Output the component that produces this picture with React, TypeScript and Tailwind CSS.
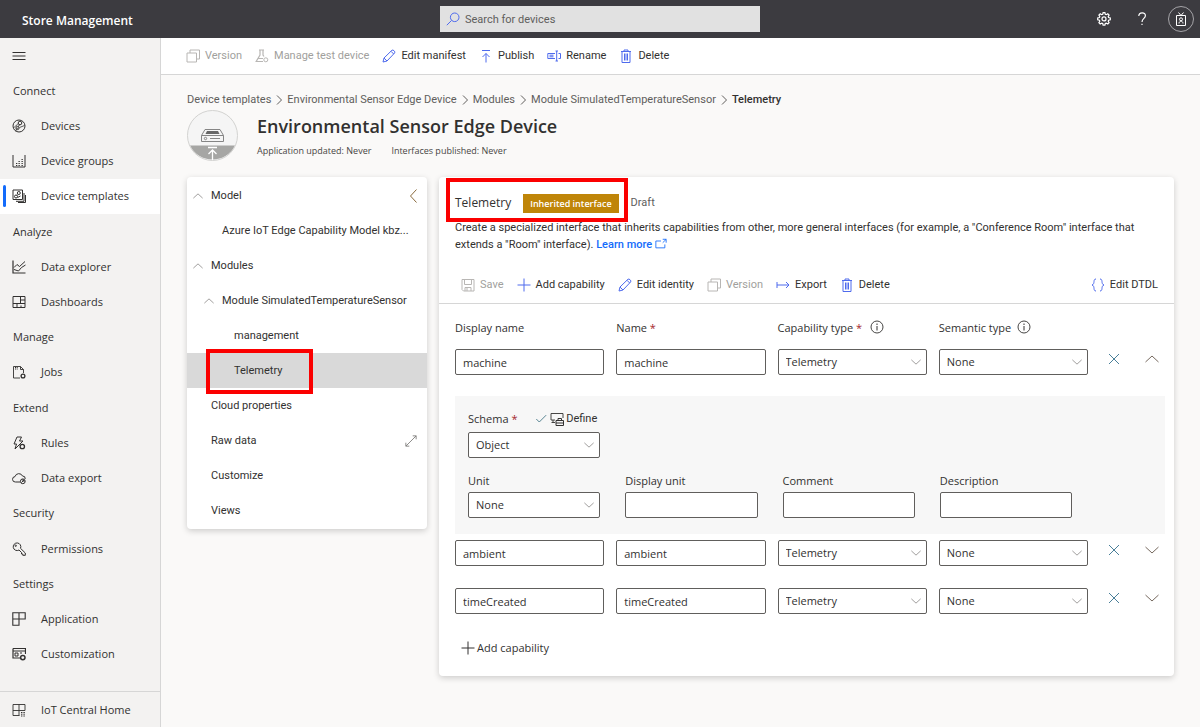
import React from "react";

type IconProps = { children: React.ReactNode; className?: string };

function Icon({ children, className = "size-3.5" }: IconProps) {
  return (
    <svg
      viewBox="0 0 14 14"
      aria-hidden="true"
      className={`shrink-0 fill-none stroke-current ${className}`}
      strokeWidth="1"
    >
      {children}
    </svg>
  );
}

const icons = {
  menu: <path d="M.5 3.5h13M.5 7h13M.5 10.5h13" />,
  devices: (
    <>
      <circle cx="7" cy="7" r="6" />
      <path d="M1.500 8.500c1.500-.5 3-2 4.500-4M4 12.500c0-2 .5-3 2-3.500M7.500 8.500l5-2" strokeWidth=".8" />
      <circle cx="8" cy="4" r="1.800" />
      <circle cx="5.500" cy="9" r="1.600" />
      <path d="m6.500 7.500 1-2" />
    </>
  ),
  groups: (
    <>
      <path d="M1 1v12h12V1" />
      <path d="M4 9.500h1.300M4 11.500h1.300M6.500 7.500h1.300M6.500 9.500h1.300M6.500 11.500h1.300M9.500 5.500h1.300M9.500 7.500h1.300M9.500 9.500h1.300M9.500 11.500h1.300" strokeWidth="1.200" />
    </>
  ),
  templates: (
    <>
      <path d="M1 1h9.500v9.500H1z" />
      <path d="M12 4v8.300H4M13.500 6v7.500H6" />
      <circle cx="6.800" cy="4" r="1.500" />
      <circle cx="4" cy="7.500" r="1.500" />
      <path d="m5 6.500 1-1M5.500 8.500l3-1.500" />
    </>
  ),
  explorer: (
    <>
      <path d="M1 .5V13h12.500" strokeWidth="1.200" />
      <path d="m2 7.500 3-3 2.500 2 5.500-5M2 9.500l4.500 1.500 3-3.500 4-2.500" />
    </>
  ),
  dashboards: <path d="M1 1.500h12v11H1zM8.500 1.500v7M1 8.500h12M8.500 5H13M5 8.500v4M9 10.500v2" />,
  jobs: (
    <>
      <path d="M8 13H1.500V1.500h7l3 3V8M8.500 1.500v3h3" strokeWidth=".9" />
      <path d="M3 4h3M3 2.500h3" strokeDasharray="1 .7" />
      <circle cx="11" cy="11" r="1.900" strokeWidth="1.300" />
    </>
  ),
  rules: (
    <>
      <path d="M5 1h4.500L7.500 5h3.500L3 13l1.500-5H2z" />
      <circle cx="10.300" cy="10.500" r="2.200" className="fill-[#f3f2f1]" strokeWidth="1.300" />
    </>
  ),
  exportCloud: (
    <>
      <path d="M8 11H3.500A2.700 2.700 0 0 1 3 5.600 4 4 0 0 1 10.500 5a2.700 2.700 0 0 1 2.700 3" />
      <circle cx="10.800" cy="10.300" r="2.400" />
      <path d="m9.500 11.500 2.400-2.400M12 11V9h-2" />
    </>
  ),
  key: (
    <>
      <path d="M8.500 6.300 13.300 11v2.300h-2.500V12H9.500v-1.500L7 8A3.800 3.800 0 1 1 8.500 6.300z" />
      <circle cx="3.700" cy="3.700" r=".7" />
    </>
  ),
  application: <path d="M.8.800h12.400v6.200H7v6.200H.8zM7 .8V7M.8 7H7" strokeWidth="1.100" />,
  customization: (
    <>
      <path d="M1 1.500h12.500V7M1 1.500V11h7M1 4h12.500" strokeWidth="1.200" />
      <path d="M3 6h3v3H3zM8 6h2" />
      <circle cx="10.800" cy="10.600" r="2.200" strokeWidth="1.500" />
    </>
  ),
  home: (
    <>
      <path d="M7.500 12.500H1v-11h12v6H1M7 1.500v11" strokeWidth=".9" />
      <path d="M9 9.500h4M9 11.200h4M9 13h4" strokeDasharray="1 .6" />
    </>
  ),
  version: <path d="M1 4h9.500v9H1zM4 4V1h9.500v9h-3" />,
  flask: (
    <>
      <path d="M4 1h5M5 1v5l-3.800 6.500H8M8 1v5l1 1.500M3 9.500h5" strokeWidth="1.200" />
      <circle cx="10.800" cy="10.800" r="2" />
    </>
  ),
  pencil: <path d="m1 13 1-4L10 1.200c1-.9 3.600 1.500 2.700 2.700L5 12zM2 9l3 3M9 2.300 11.700 5" />,
  publish: <path d="M3 1.500h8M7 13.500v-9M3.500 8 7 4.500 10.500 8" />,
  rename: <path d="M8 9.500H.8v-5H8M2.500 6.200h4M2.500 7.800h4M8.500 2h2.500M8.500 12h2.500M9.700 2v10M11.500 4.500h2v5h-2" />,
  trash: <path d="M2 2.500h10M5 2.500V1h4v1.500M3 2.500v11h8v-11M5.500 4.500v7M7 4.500v7M8.500 4.500v7" />,
  save: <path d="M1 1.500h12v11.500H2.500L1 11.500zM3.500 1.500v5h7v-5M4 13V9.500h6V13M6 10v3" />,
  plus: <path d="M7 .5v13M.5 7h13" />,
  exportRight: <path d="M1 4v6M1 7h12M10 4l3 3-3 3" />,
  braces: <path d="M5 1C1.500 1 4.500 6 1 7c3.500 1 .5 6 4 6M9 1c3.500 0 .5 5 4 6-3.500 1-.5 6-4 6" />,
  chevronUp: <path d="m.5 10 6.500-6 6.500 6" />,
  chevronDown: <path d="m.5 4 6.500 6 6.500-6" />,
  chevronLeft: <path d="M10.500.5 4.500 7l6 6.500" />,
  chevronRight: <path d="m5 2.500 4.500 4.500L5 11.500" />,
  expand: <path d="M1 13 13 1M9 1h4v4M1 9v4h4" />,
  close: <path d="m2 2 10 10M12 2 2 12" />,
  check: <path d="m1.500 7 3.500 3.500 8-8" />,
  info: (
    <>
      <circle cx="7" cy="7" r="6" strokeWidth=".9" />
      <path d="M7 6v4.500M7 3.500V5" />
    </>
  ),
  external: <path d="M7 3.500H1v8h10.500V7.500M9 1.500h4v4M13 1.500 9 5.500" />,
  define: (
    <>
      <path d="M5 8H1V1.500h12V6M1.500 10.500H5M3 8v2.500" strokeWidth=".9" />
      <path d="M6 8.500h7.500v5H6zM8 8.500v-2h3.500v2M6 11h7.500" />
    </>
  ),
  search: (
    <>
      <circle cx="8.700" cy="5.300" r="4.300" />
      <path d="M5.600 8.400.8 13.200" />
    </>
  ),
};

type IconName = keyof typeof icons;
type NavEntry = { label: string; icon?: IconName; active?: boolean };

const nav: NavEntry[] = [
  { label: "Connect" },
  { label: "Devices", icon: "devices" },
  { label: "Device groups", icon: "groups" },
  { label: "Device templates", icon: "templates", active: true },
  { label: "Analyze" },
  { label: "Data explorer", icon: "explorer" },
  { label: "Dashboards", icon: "dashboards" },
  { label: "Manage" },
  { label: "Jobs", icon: "jobs" },
  { label: "Extend" },
  { label: "Rules", icon: "rules" },
  { label: "Data export", icon: "exportCloud" },
  { label: "Security" },
  { label: "Permissions", icon: "key" },
  { label: "Settings" },
  { label: "Application", icon: "application" },
  { label: "Customization", icon: "customization" },
];

const compact = "font-[Roboto,'Noto_Sans',sans-serif]";

function Sidebar() {
  return (
    <aside className="flex w-[161px] shrink-0 flex-col border-r border-[#d6d6d6] bg-[#f3f2f1]">
      <button type="button" aria-label="Toggle navigation" className="flex h-[35px] shrink-0 items-center pl-3">
        <Icon>{icons.menu}</Icon>
      </button>
      <nav className="flex flex-1 flex-col pb-[19px]">
        {nav.map((n) =>
          n.icon ? (
            <a
              key={n.label}
              href="#"
              className={`flex min-h-7 flex-1 items-center ${n.active ? "bg-white" : ""}`}
            >
              <span className={`ml-[3px] h-[22px] w-[3px] rounded-sm ${n.active ? "bg-[#136bfb]" : ""}`} />
              <Icon className="mr-[15px] ml-1.5 size-3.5">{icons[n.icon]}</Icon>
              {n.label}
            </a>
          ) : (
            <h2 key={n.label} className="flex min-h-7 flex-1 items-center pl-[13px] font-medium">
              {n.label}
            </h2>
          ),
        )}
      </nav>
      <a href="#" className="flex h-9 shrink-0 items-center gap-[15px] border-t border-[#d6d6d6] pl-3">
        <Icon>{icons.home}</Icon>
        IoT Central Home
      </a>
    </aside>
  );
}

function Header() {
  return (
    <header className="grid h-[38px] shrink-0 grid-cols-[1fr_320px_1fr] items-center bg-[#3c3b40] text-white">
      <div className="pt-1 pl-[22px] text-[12px] font-semibold">Store Management</div>
      <label className="flex h-[26px] items-center gap-[5px] bg-[#e1e1e1] pl-1.5 text-[#4f6bed]">
        <Icon>{icons.search}</Icon>
        <input
          type="search"
          aria-label="Search for devices"
          placeholder="Search for devices"
          className={`${compact} min-w-0 flex-1 bg-transparent pt-0.5 text-[#323130] outline-none placeholder:text-[#605e5c]`}
        />
      </label>
      <div className="flex items-center justify-end gap-[22px] pr-1.5">
        <button type="button" aria-label="Settings" className="flex size-4 items-center justify-center">
          <Icon>
            <path d="m5.700 2.300.4-1.700h1.800l.4 1.700 1 .4 1.500-.9 1.300 1.300-.9 1.500.4 1 1.700.4v1.800l-1.700.4-.4 1 .9 1.500-1.300 1.300-1.500-.9-1 .4-.4 1.700H6.100l-.4-1.700-1-.4-1.500.9-1.300-1.300.9-1.500-.4-1L.7 7.800V6l1.700-.4.4-1-.9-1.500 1.300-1.300 1.500.9z" strokeWidth="1.200" />
            <circle cx="7" cy="6.900" r="2" strokeWidth="1.200" />
          </Icon>
        </button>
        <div className="flex items-center gap-[18px]">
          <button type="button" aria-label="Help" className="flex size-4 items-center justify-center">
            <Icon>
              <path d="M3.800 4C3.800 1.800 5.200.8 7.200.8s3.200 1.100 3.200 2.900C10.400 6.300 7 6.500 7 10M7 11.700V13" strokeWidth="1.200" />
            </Icon>
          </button>
          <button
            type="button"
            aria-label="Account"
            className="flex size-[26px] items-center justify-center rounded-full border border-[#a5a4a8]"
          >
            <Icon>
              <path d="M2.500 3.500h9v10h-9zM4.500.5 7 3.500l2.500-3M5 11.500c0-3 4-3 4 0" />
              <circle cx="7" cy="7.300" r="1.500" />
            </Icon>
          </button>
        </div>
      </div>
    </header>
  );
}

function Command({ icon, label, disabled, quiet }: { icon: IconName; label: string; disabled?: boolean; quiet?: boolean }) {
  return (
    <button
      type="button"
      disabled={disabled}
      className={`flex items-center whitespace-nowrap ${quiet ? "gap-0.5" : "gap-[5px]"} ${disabled ? "text-[#a19f9d]" : "text-[#323130]"}`}
    >
      <Icon
        className={disabled ? "size-3.5 text-[#b8b6b4]" : quiet ? "size-3.5" : "size-3.5 text-[#4f6bed]"}
      >
        {icons[icon]}
      </Icon>
      {label}
    </button>
  );
}

const box = "h-[26px] w-full min-w-0 rounded-xs border border-[#605e5c] bg-white px-[7px] text-[#323130] outline-none";

function TextBox({ label, id, value = "" }: { label?: string; id?: string; value?: string }) {
  return <input type="text" id={id} aria-label={label} defaultValue={value} className={box} />;
}

function Select({ label, id, value }: { label?: string; id?: string; value: string }) {
  return (
    <div className="relative">
      <select id={id} aria-label={label} defaultValue={value} className={`${box} block appearance-none`}>
        <option>{value}</option>
      </select>
      <span className="pointer-events-none absolute inset-y-0 right-1.5 flex items-center text-[#7a7876]">
        <Icon className="size-2.5">{icons.chevronDown}</Icon>
      </span>
    </div>
  );
}

const rowGrid = "grid grid-cols-[repeat(4,minmax(0,1fr))_65px] gap-x-3";

function CapabilityRow({ name, open }: { name: string; open?: boolean }) {
  return (
    <div className={rowGrid}>
      <TextBox label="Display name" value={name} />
      <TextBox label="Name" value={name} />
      <Select label="Capability type" value="Telemetry" />
      <Select label="Semantic type" value="None" />
      <div className="flex h-5 items-center justify-between pr-1.5 pl-[7px]">
        <button type="button" aria-label={`Remove ${name}`} className="text-[#4a7f99]">
          <Icon>{icons.close}</Icon>
        </button>
        <button type="button" aria-label={open ? "Collapse" : "Expand"} className="text-[#76695f]">
          <Icon>{open ? icons.chevronUp : icons.chevronDown}</Icon>
        </button>
      </div>
    </div>
  );
}

const Star = () => <span className="text-[#a4262c]"> *</span>;

function Details() {
  return (
    <div className="mt-[21px] mb-1.5 bg-[#f7f7f7] pt-3.5 pr-[93px] pb-4 pl-[13px]">
      <div className="grid grid-cols-4 gap-x-[25px]">
        <div>
          <div className="flex h-[22px] items-start justify-between pt-px pr-[3px] leading-4">
            <label htmlFor="schema" className="font-medium">
              Schema
              <Star />
            </label>
            <span className={`${compact} flex items-center gap-[3px]`}>
              <Icon className="size-3 text-[#3d7182]">{icons.check}</Icon>
              <Command icon="define" label="Define" quiet />
            </span>
          </div>
          <Select id="schema" value="Object" />
        </div>
      </div>
      <div className="mt-3.5 grid grid-cols-4 gap-x-[25px]">
        <div>
          <label htmlFor="unit" className="block h-5 pt-px leading-4 font-medium">Unit</label>
          <Select id="unit" value="None" />
        </div>
        <div>
          <label htmlFor="display-unit" className="block h-5 pt-px leading-4 font-medium">Display unit</label>
          <TextBox id="display-unit" />
        </div>
        <div>
          <label htmlFor="comment" className="block h-5 pt-px leading-4 font-medium">Comment</label>
          <TextBox id="comment" />
        </div>
        <div>
          <label htmlFor="description" className="block h-5 pt-px leading-4 font-medium">Description</label>
          <TextBox id="description" />
        </div>
      </div>
    </div>
  );
}

type TreeEntry = { label: string; pad: string; open?: boolean; selected?: boolean; end?: IconName };

const tree: TreeEntry[] = [
  { label: "Model", pad: "pl-1.5", open: true, end: "chevronLeft" },
  { label: "Azure IoT Edge Capability Model kbz...", pad: "pl-[35px]" },
  { label: "Modules", pad: "pl-1.5", open: true },
  { label: "Module SimulatedTemperatureSensor", pad: "pl-[17px]", open: true },
  { label: "management", pad: "pl-[47px]" },
  { label: "Telemetry", pad: "pl-[47px]", selected: true },
  { label: "Cloud properties", pad: "pl-6" },
  { label: "Raw data", pad: "pl-6", end: "expand" },
  { label: "Customize", pad: "pl-6" },
  { label: "Views", pad: "pl-6" },
];

function ModelTree() {
  return (
    <section className={`${compact} w-60 shrink-0 rounded bg-white py-px shadow-[0_2px_6px_rgba(0,0,0,0.18)]`}>
      <ul>
        {tree.map((t) => (
          <li
            key={t.label}
            className={`relative flex h-[35px] items-center justify-between pt-px ${t.pad} ${t.selected ? "bg-[#d9d9d9]" : ""}`}
          >
            <button type="button" className="flex items-center gap-2 whitespace-nowrap">
              {t.open && <Icon className="size-2.5 text-[#7a7876]">{icons.chevronUp}</Icon>}
              {t.label}
            </button>
            {t.end === "chevronLeft" && <Icon className="mr-[7px] size-3.5 text-[#8a6a3c]">{icons.chevronLeft}</Icon>}
            {t.end === "expand" && <Icon className="mr-2.5 size-3 text-[#7a7876]">{icons.expand}</Icon>}
            {t.selected && (
              <span className="pointer-events-none absolute -top-1 left-[19px] h-[45px] w-[107px] border-4 border-[#fb0000]" />
            )}
          </li>
        ))}
      </ul>
    </section>
  );
}

function Editor() {
  return (
    <section className="min-w-0 flex-1 rounded bg-white pb-[18px] shadow-[0_2px_6px_rgba(0,0,0,0.18)]">
      <div className={`${compact} border-b border-[#d6d6d6] px-4 pb-2`}>
        <div className="flex h-[42px] items-center gap-3 pt-2.5">
          <div className="relative flex items-center gap-3">
            <h2 className="font-['Open_Sans','Noto_Sans',sans-serif] text-[12px] leading-5 font-medium">Telemetry</h2>
            <span className="bg-[#bf8508] px-[7px] font-['Open_Sans','Noto_Sans',sans-serif] text-[9px] leading-[19px] font-semibold text-white">
              Inherited interface
            </span>
            <span className="pointer-events-none absolute -inset-x-[9px] -top-[15px] h-11 border-4 border-[#fb0000]" />
          </div>
          <span className="text-[#605e5c]">Draft</span>
        </div>
        <p className="leading-[17px]">
          Create a specialized interface that inherits capabilities from other, more general interfaces (for example, a
          "Conference Room" interface that extends a "Room" interface).{" "}
          <a href="#" className="font-medium text-[#136bfb]">
            Learn more<Icon className="ml-[3px] inline size-3 align-[-2px]">{icons.external}</Icon>
          </a>
        </p>
        <div className="mt-[22px] flex h-5 items-center gap-[13px] pl-1.5">
          <Command icon="save" label="Save" disabled />
          <Command icon="plus" label="Add capability" />
          <Command icon="pencil" label="Edit identity" />
          <Command icon="version" label="Version" disabled />
          <Command icon="exportRight" label="Export" />
          <Command icon="trash" label="Delete" />
          <div className="ml-auto">
            <Command icon="braces" label="Edit DTDL" />
          </div>
        </div>
      </div>
      <div className="pr-[9px] pl-4">
        <div className={`${rowGrid} h-[45px] items-center pt-0.5 font-medium`}>
          <span>Display name</span>
          <span>
            Name
            <Star />
          </span>
          <span className="flex items-center gap-2">
            <span>
              Capability type
              <Star />
            </span>
            <Icon className="mb-0.5 size-3.5">{icons.info}</Icon>
          </span>
          <span className="flex items-center gap-1.5">
            Semantic type <Icon className="mb-0.5 size-3.5">{icons.info}</Icon>
          </span>
        </div>
        <CapabilityRow name="machine" open />
        <Details />
        <div className="flex flex-col gap-[22px]">
          <CapabilityRow name="ambient" />
          <CapabilityRow name="timeCreated" />
        </div>
        <div className="mt-6 flex h-5 items-center pl-1.5">
          <Command icon="plus" label="Add capability" quiet />
        </div>
      </div>
    </section>
  );
}

const crumbs = ["Device templates", "Environmental Sensor Edge Device", "Modules", "Module SimulatedTemperatureSensor"];

export default function App() {
  return (
    <div className="flex min-h-screen flex-col bg-[#faf9f8] font-['Open_Sans','Noto_Sans',sans-serif] text-[11px] leading-4 text-[#323130]">
      <Header />
      <div className="flex flex-1">
        <Sidebar />
        <main className="min-w-0 flex-1">
          <div
            className={`${compact} flex h-[37px] items-center gap-[13px] border-b border-[#d6d6d6] bg-white pl-[25px]`}
          >
            <Command icon="version" label="Version" disabled />
            <Command icon="flask" label="Manage test device" disabled />
            <Command icon="pencil" label="Edit manifest" />
            <Command icon="publish" label="Publish" />
            <Command icon="rename" label="Rename" />
            <Command icon="trash" label="Delete" />
          </div>
          <div className="px-[26px] pt-[17px] pb-6">
            <nav
              aria-label="Breadcrumb"
              className={`${compact} flex items-center whitespace-nowrap text-[#605e5c]`}
            >
              {crumbs.map((c) => (
                <React.Fragment key={c}>
                  <a href="#">{c}</a>
                  <Icon className="mx-px size-3.5">{icons.chevronRight}</Icon>
                </React.Fragment>
              ))}
              <span className="font-medium text-[#323130]">Telemetry</span>
            </nav>
            <div className="mt-0.5 flex gap-[19px]">
              <svg viewBox="0 0 51 51" aria-hidden="true" className="size-[51px] shrink-0 fill-none">
                <circle cx="25.500" cy="25.500" r="25" className="fill-[#f5f5f5]" />
                <path d="M3 35.500h45A25 25 0 0 1 3 35.500z" className="fill-[#a6a6a4]" />
                <circle cx="25.500" cy="25.500" r="25" className="stroke-[#d2d2d0]" />
                <path d="M14.500 25.500 18 19.500h15l3.500 6v6h-22zM14.500 25.500h22" className="stroke-[#858585]" />
                <path d="M18.500 24 20 21h11l1.500 3z" className="fill-[#666]" />
                <circle cx="18.500" cy="28.500" r="1.200" className="stroke-[#858585]" />
                <path d="M23 28.500h10" className="stroke-[#858585]" />
                <path d="M21 37.500h9M25.500 50V40M21.500 44l4-4 4 4" className="stroke-white" strokeWidth="1.300" />
              </svg>
              <div>
                <h1 className="pt-0.5 text-[18px] leading-7 font-semibold">Environmental Sensor Edge Device</h1>
                <div className="mt-[3px] flex gap-5 text-[9px] leading-4 text-[#484644]">
                  <span>Application updated: Never</span>
                  <span>Interfaces published: Never</span>
                </div>
              </div>
            </div>
            <div className="mt-4 flex items-start gap-3">
              <ModelTree />
              <Editor />
            </div>
          </div>
        </main>
      </div>
    </div>
  );
}
